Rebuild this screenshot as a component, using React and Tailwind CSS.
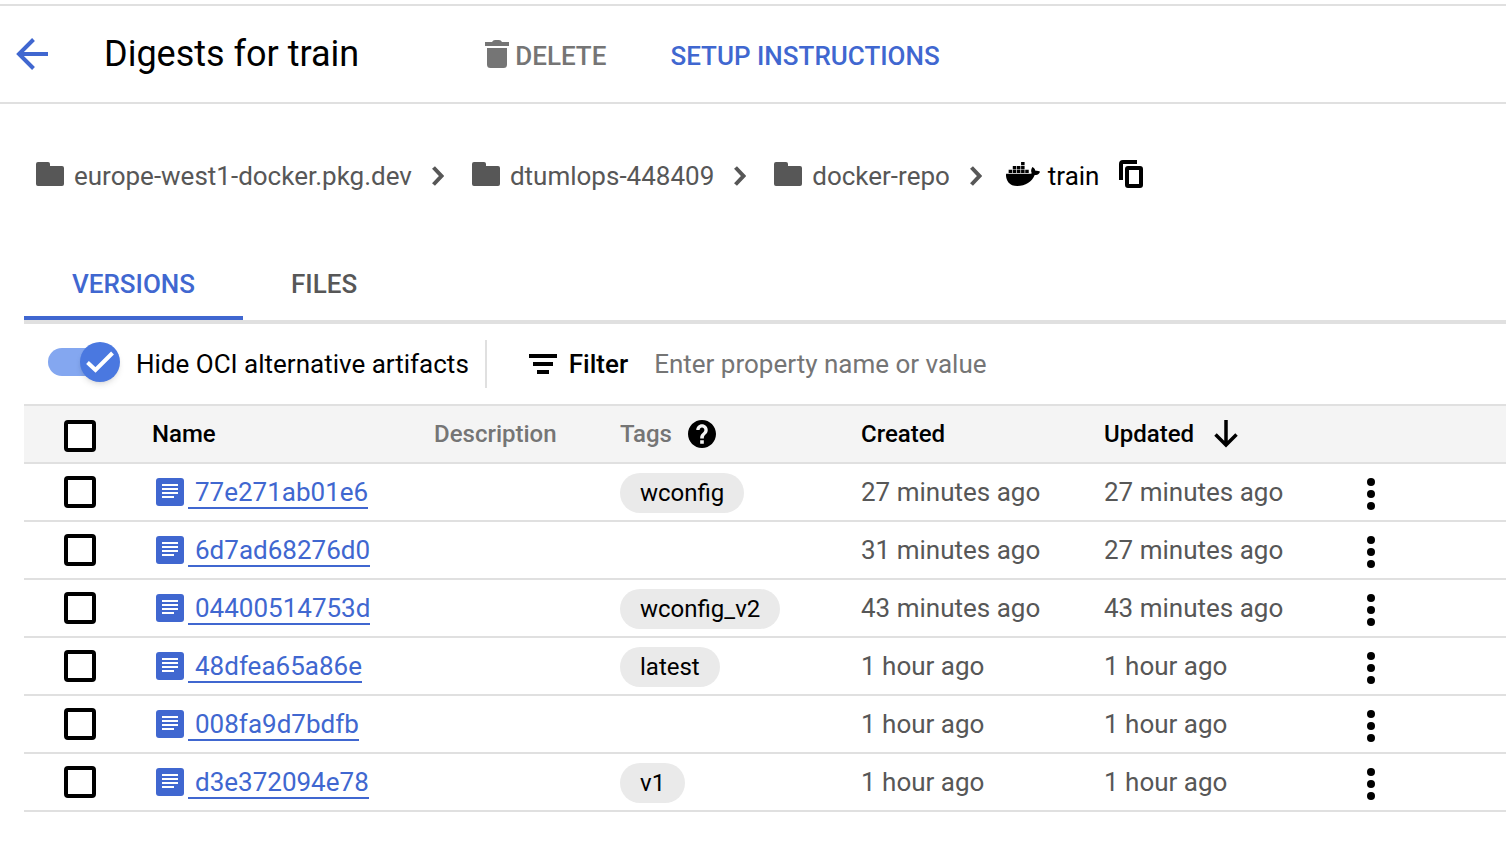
import { FaDocker } from "react-icons/fa";

const rows = [
  { name: "77e271ab01e6", tag: "wconfig", created: "27 minutes ago", updated: "27 minutes ago" },
  { name: "6d7ad68276d0", tag: "", created: "31 minutes ago", updated: "27 minutes ago" },
  { name: "04400514753d", tag: "wconfig_v2", created: "43 minutes ago", updated: "43 minutes ago" },
  { name: "48dfea65a86e", tag: "latest", created: "1 hour ago", updated: "1 hour ago" },
  { name: "008fa9d7bdfb", tag: "", created: "1 hour ago", updated: "1 hour ago" },
  { name: "d3e372094e78", tag: "v1", created: "1 hour ago", updated: "1 hour ago" },
];

function BackIcon() {
  return (
    <svg width="32" height="32" viewBox="0 0 32 32" fill="none" stroke="currentColor" strokeWidth="4" aria-hidden="true">
      <path d="M32 16H4M17.5 1.5L3 16l14.5 14.5" />
    </svg>
  );
}

function TrashIcon() {
  return (
    <svg width="24" height="28" viewBox="0 0 24 28" fill="currentColor" aria-hidden="true">
      <path d="M0 2h7q1-2 3-2h4q2 0 3 2h7v4H0zM2 8h20v16.500a3.500 3.500 0 0 1-3.500 3.500h-13A3.500 3.500 0 0 1 2 24.500z" />
    </svg>
  );
}

function FolderIcon() {
  return (
    <svg width="28" height="24" viewBox="0 0 28 24" fill="currentColor" aria-hidden="true">
      <path d="M2 0h10a2 2 0 0 1 2 2v2h12a2 2 0 0 1 2 2v16a2 2 0 0 1-2 2H2a2 2 0 0 1-2-2V2a2 2 0 0 1 2-2z" />
    </svg>
  );
}

function ChevronIcon() {
  return (
    <svg width="12" height="20" viewBox="0 0 12 20" fill="none" stroke="currentColor" strokeWidth="4" aria-hidden="true">
      <path d="M1.500 1.500L9.500 10l-8 8.500" />
    </svg>
  );
}

function CopyIcon() {
  return (
    <svg width="24" height="28" viewBox="0 0 24 28" fill="none" stroke="currentColor" strokeWidth="4" aria-hidden="true">
      <path d="M18 2H4a2 2 0 0 0-2 2v16" />
      <rect x="8" y="8" width="14" height="18" rx="1" />
    </svg>
  );
}

function FilterIcon() {
  return (
    <svg width="28" height="20" viewBox="0 0 28 20" fill="currentColor" aria-hidden="true">
      <path d="M0 0h28v4H0zM4 8h20v4H4zM8 16h12v4H8z" />
    </svg>
  );
}

function HelpIcon() {
  return (
    <svg width="28" height="28" viewBox="2 2 20 20" fill="currentColor" aria-hidden="true">
      <path d="M12 2C6.480 2 2 6.480 2 12s4.480 10 10 10 10-4.480 10-10S17.520 2 12 2zm1.300 17h-2.600v-2.600h2.600V19zm1.900-7.300l-.9.920C13.600 13.350 13.300 13.900 13.300 15.200h-2.600v-.6c0-1.100.45-2.100 1.170-2.830l1.240-1.260c.37-.36.590-.86.590-1.410 0-.95-.75-1.700-1.700-1.700s-1.700.75-1.700 1.700H7.900C7.900 6.850 9.740 5 12 5s4.100 1.850 4.100 4.100c0 .9-.36 2.010-.9 2.600z" />
    </svg>
  );
}

function ArrowDownIcon() {
  return (
    <svg width="24" height="28" viewBox="0 0 24 28" fill="none" stroke="currentColor" strokeWidth="3.500" aria-hidden="true">
      <path d="M12 0v25M1.500 14.500L12 25l10.500-10.500" />
    </svg>
  );
}

function DocumentIcon() {
  return (
    <svg width="28" height="28" viewBox="0 0 28 28" aria-hidden="true">
      <rect width="28" height="28" rx="3" fill="#4067d0" />
      <path d="M6 6h16v2H6zM6 10h16v2H6zM6 14h16v2H6zM6 18h12v2H6z" fill="#fff" />
    </svg>
  );
}

function MoreIcon() {
  return (
    <svg width="8" height="32" viewBox="0 0 8 32" fill="currentColor" aria-hidden="true">
      <circle cx="4" cy="4" r="4" />
      <circle cx="4" cy="16" r="4" />
      <circle cx="4" cy="28" r="4" />
    </svg>
  );
}

function RowCheckbox({ label }) {
  return (
    <input
      type="checkbox"
      aria-label={label}
      className="block size-8 appearance-none rounded-sm border-4 border-black bg-white checked:bg-[#4067d0]"
    />
  );
}

function Crumb({ children }) {
  return (
    <li className="flex items-center">
      <a href="#" className="flex items-center gap-[10px]">
        <span className="pb-1"><FolderIcon /></span>
        {children}
      </a>
      <span className="ml-5"><ChevronIcon /></span>
    </li>
  );
}

export default function App() {
  return (
    <div className="bg-white pt-1 font-['Roboto',sans-serif] text-[26px] leading-8 text-black">
      <header className="flex h-[100px] items-center border-y-2 border-[#e0e0e0] pl-4">
        <button type="button" aria-label="Back" className="text-[#4067d0]">
          <BackIcon />
        </button>
        <h1 className="ml-14 text-[36px] leading-10">Digests for train</h1>
        <button type="button" className="ml-[126px] flex items-center gap-[6px] font-medium text-[#757575]">
          <TrashIcon />
          <span className="pt-1">DELETE</span>
        </button>
        <button type="button" className="ml-16 pt-1 font-medium text-[#4067d0]">
          SETUP INSTRUCTIONS
        </button>
      </header>

      <nav aria-label="Breadcrumb" className="px-9 pt-14">
        <ol className="flex h-8 items-center gap-7 text-[#575757]">
          <Crumb>europe-west1-docker.pkg.dev</Crumb>
          <Crumb>dtumlops-448409</Crumb>
          <Crumb>docker-repo</Crumb>
          <li className="-ml-1 flex items-center text-black">
            <span className="pb-1"><FaDocker size={34} aria-hidden="true" /></span>
            <span className="ml-2">train</span>
            <button type="button" aria-label="Copy path" className="ml-5 pb-1">
              <CopyIcon />
            </button>
          </li>
        </ol>
      </nav>

      <main className="pl-6 pt-[60px]">
        <div role="tablist" className="flex border-b-4 border-[#e0e0e0] font-medium">
          <button type="button" role="tab" aria-selected="true" className="h-[68px] border-b-4 border-[#4067d0] px-12 text-[#4067d0]">
            VERSIONS
          </button>
          <button type="button" role="tab" aria-selected="false" className="h-[68px] border-b-4 border-transparent px-12 text-[#575757]">
            FILES
          </button>
        </div>

        <div className="flex h-20 items-center pl-6">
          <label className="flex items-center gap-4">
            <span className="pb-1">
              <span className="relative flex h-10 w-[72px] items-center">
                <input type="checkbox" role="switch" defaultChecked className="h-7 w-16 appearance-none rounded-full bg-[#84a7f0]" />
                <span className="pointer-events-none absolute right-0 top-0 flex size-10 items-center justify-center rounded-full bg-[#4a78e0] shadow-md">
                  <svg width="28" height="22" viewBox="0 0 28 22" fill="none" stroke="#fff" strokeWidth="4" aria-hidden="true">
                    <path d="M1.500 11.500L9.500 19 26.500 2" />
                  </svg>
                </span>
              </span>
            </span>
            <span>Hide OCI alternative artifacts</span>
          </label>
          <div className="ml-4 h-12 w-[2px] bg-[#e0e0e0]" />
          <label htmlFor="filter" className="ml-[42px] flex items-center gap-3 font-medium">
            <FilterIcon />
            Filter
          </label>
          <input
            id="filter"
            type="text"
            placeholder="Enter property name or value"
            className="ml-[26px] min-w-0 flex-1 outline-none placeholder:text-[#757575]"
          />
        </div>

        <table className="w-full table-fixed border-separate border-spacing-0 text-left">
          <colgroup>
            <col className="w-32" />
            <col className="w-[282px]" />
            <col className="w-[186px]" />
            <col className="w-[241px]" />
            <col className="w-[243px]" />
            <col className="w-[243px]" />
            <col />
          </colgroup>
          <thead className="bg-[#f4f4f4] text-[24px] text-[#757575] [&_th]:h-[60px] [&_th]:border-y-2 [&_th]:border-[#e0e0e0] [&_th]:p-0 [&_th]:font-medium">
            <tr>
              <th>
                <div className="pl-10 pt-1"><RowCheckbox label="Select all" /></div>
              </th>
              <th className="text-black">Name</th>
              <th>Description</th>
              <th>
                <div className="flex items-center gap-4">
                  Tags
                  <button type="button" aria-label="About tags" className="text-black"><HelpIcon /></button>
                </div>
              </th>
              <th className="text-black">Created</th>
              <th className="text-black" aria-sort="descending">
                <button type="button" className="flex items-center gap-5">
                  Updated
                  <ArrowDownIcon />
                </button>
              </th>
              <th aria-label="Actions" />
            </tr>
          </thead>
          <tbody className="text-[#575757] [&_td]:h-[58px] [&_td]:border-b-2 [&_td]:border-[#e0e0e0] [&_td]:p-0">
            {rows.map((row) => (
              <tr key={row.name}>
                <td>
                  <div className="pl-10"><RowCheckbox label={`Select ${row.name}`} /></div>
                </td>
                <td>
                  <div className="flex items-center gap-1 pl-1">
                    <DocumentIcon />
                    <div>
                      <a href="#" className="border-b-2 border-[#4067d0] pl-[7px] text-[#4067d0]">{row.name}</a>
                    </div>
                  </div>
                </td>
                <td />
                <td>
                  {row.tag && (
                    <span className="mt-[2px] inline-flex h-10 items-center rounded-full bg-[#eaeaea] px-5 align-middle text-[24px] text-black">
                      {row.tag}
                    </span>
                  )}
                </td>
                <td>{row.created}</td>
                <td>{row.updated}</td>
                <td>
                  <button type="button" aria-label={`Actions for ${row.name}`} className="ml-5 mt-1 block text-black">
                    <MoreIcon />
                  </button>
                </td>
              </tr>
            ))}
          </tbody>
        </table>
      </main>
    </div>
  );
}
